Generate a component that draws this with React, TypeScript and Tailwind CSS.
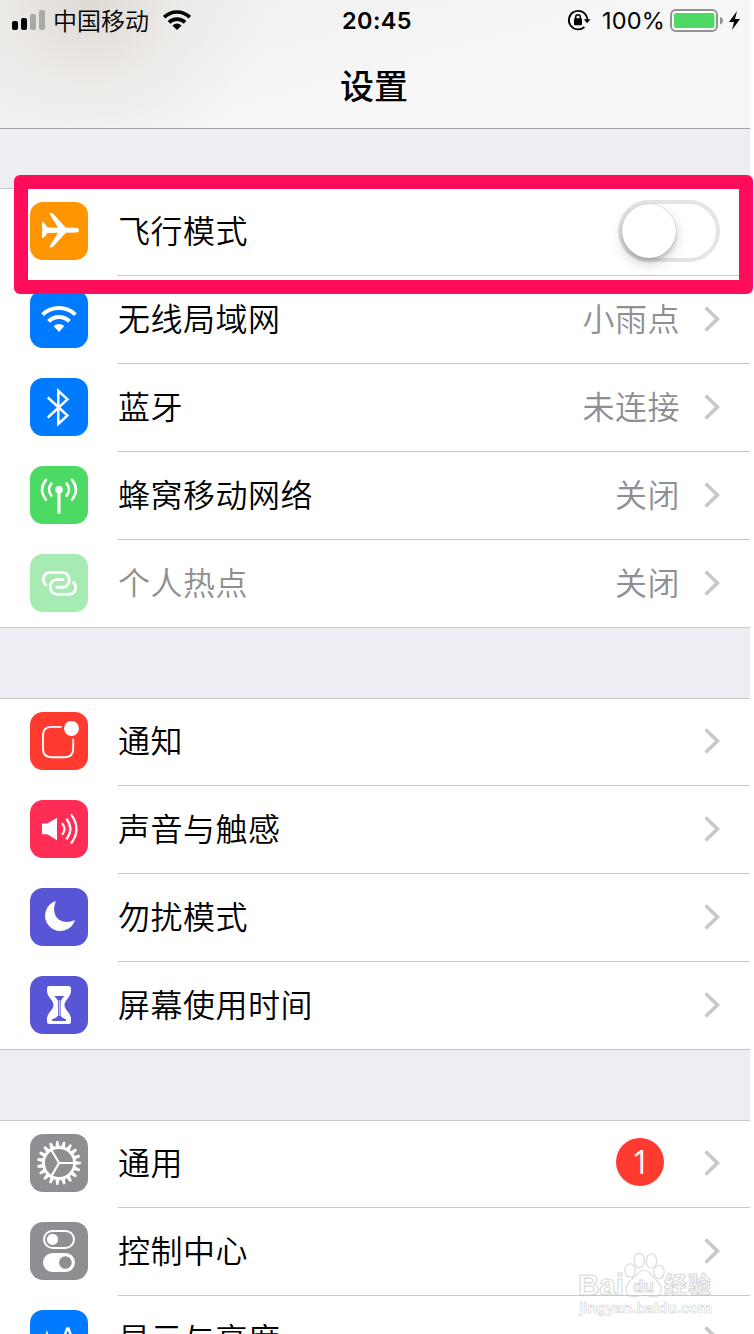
import type { ReactNode } from "react";

const PlaneIcon = () => (
  <svg viewBox="0 0 58 58" className="size-full" fill="#fff">
    <path d="M12 20 H13.6 L17.5 25.6 L28 25.8 L19 11 H22.6 L35.8 25.7 L46 25.8 Q49 26.2 49 28.2 Q49 30.2 46 30.6 L35.8 30.7 L22.6 45.2 H19 L28 30.8 L17.5 31 L13.6 36 H12 V30 L12.6 28.3 L12 26.5 Z" />
  </svg>
);

const WifiIcon = () => (
  <svg viewBox="0 0 58 58" className="size-full" fill="none" stroke="#fff" strokeWidth="4">
    <path d="M12.6 24.6 A24 24 0 0 1 45.4 24.6" />
    <path d="M18.6 31.4 A14.5 14.5 0 0 1 39.4 31.4" />
    <path d="M23.6 36 Q29 32 34.4 36 L29 42 Z" fill="#fff" stroke="none" />
  </svg>
);

const BluetoothIcon = () => (
  <svg viewBox="0 0 58 58" className="size-full" fill="none" stroke="#fff" strokeWidth="2.5">
    <path d="M17.8 19.5 L37.5 37.5 L28.3 46 V12.8 L37.5 21.3 L17.8 39.5" />
  </svg>
);

const CellularIcon = () => (
  <svg viewBox="0 0 58 58" className="size-full" fill="none" stroke="#fff" strokeWidth="2.6" strokeLinecap="round">
    <circle cx="29" cy="23.5" r="3.8" fill="#fff" stroke="none" />
    <path d="M29 24 V46.5" strokeWidth="3.2" />
    <path d="M21.4 17.4 Q16.6 23.5 21.4 29.6 M36.6 17.4 Q41.4 23.5 36.6 29.6" />
    <path d="M16 13.9 Q8 23.8 16 33.7 M42 13.9 Q50 23.8 42 33.7" />
  </svg>
);

const HotspotIcon = () => (
  <svg viewBox="0 0 58 58" className="size-full" fill="none" stroke="#fff" strokeWidth="2.9" strokeLinecap="round">
    <path d="M15.8 30.8 C11.5 26.6 13 18.4 20.5 18.4 H32 C41.5 18.4 41.5 33.2 33 33.2 H27" />
    <path d="M43.4 28.2 C47.5 32.5 46 40.4 38.5 40.4 H27.5 C18 40.4 18 25.6 27 25.6 H33" />
  </svg>
);

const NotificationIcon = () => (
  <svg viewBox="0 0 58 58" className="size-full" fill="none" stroke="#fff" strokeWidth="1.9">
    <path d="M31.5 14.9 H21.5 Q13 14.9 13 23.4 V36.8 Q13 45.2 21.5 45.2 H34.8 Q43.2 45.2 43.2 36.8 V26.8" />
    <circle cx="41.5" cy="16.4" r="7.5" fill="#fff" stroke="none" />
  </svg>
);

const SoundIcon = () => (
  <svg viewBox="0 0 58 58" className="size-full" fill="none" stroke="#fff" strokeWidth="2.2">
    <path d="M12 23.6 H17.3 L27 17.8 V40.3 L17.3 34.3 H12 Z" fill="#fff" stroke="none" />
    <path d="M32 23.2 Q37 29 32 34.8 M36.4 18.8 Q44.4 29 36.4 39.2 M41 14.4 Q52 29 41 43.6" />
  </svg>
);

const MoonIcon = () => (
  <svg viewBox="0 0 58 58" className="size-full" fill="#fff">
    <path d="M26 13 A15.3 15.3 0 1 0 45 32 C31 38.5 19.5 28 26 13 Z" />
  </svg>
);

const HourglassIcon = () => (
  <svg viewBox="0 0 58 58" className="size-full">
    <path d="M19.5 10 H38.5 Q41 10 41 12.5 V15 C41 21 34.5 24 34.5 29 C34.5 34 41 37 41 43 V45.5 Q41 48 38.5 48 H19.5 Q17 48 17 45.5 V43 C17 37 23.5 34 23.5 29 C23.5 24 17 21 17 15 V12.5 Q17 10 19.5 10 Z" fill="#fff" />
    <path d="M24 20 H34.7 Q30.8 23.3 30.6 26 V39.6 Q31.5 41.8 36 43.4 V45 H22 V43.4 Q27 41.8 28 39.6 V26 Q28 23.3 24 20 Z" fill="#5856d6" />
    <path d="M29.3 24 V40" stroke="#fff" strokeWidth="0.8" />
  </svg>
);

const teeth = Array.from({ length: 19 }, (_, i) => (i * 360) / 19);

const GearIcon = () => (
  <svg viewBox="0 0 58 58" className="size-full">
    <circle cx="29" cy="29" r="15.5" fill="none" stroke="#fff" strokeWidth="2.8" />
    {teeth.map((angle) => (
      <path key={angle} d="M44.5 26.8 L51 27.9 V30.1 L44.5 31.2 Z" fill="#fff" transform={`rotate(${angle} 29 29)`} />
    ))}
    <path d="M29 29 H44 M29 29 L21.2 15.5 M29 29 L21.2 42.5" stroke="#fff" strokeWidth="2.2" />
  </svg>
);

const ControlIcon = () => (
  <svg viewBox="0 0 58 58" className="size-full">
    <rect x="14" y="8.9" width="30" height="17" rx="8.5" fill="none" stroke="#fff" strokeWidth="2" />
    <circle cx="22.5" cy="17.4" r="5.6" fill="#fff" />
    <rect x="13" y="31" width="32" height="19" rx="9.5" fill="#fff" />
    <circle cx="35.4" cy="40.5" r="6.3" fill="#8e8e93" />
  </svg>
);

const DisplayIcon = () => (
  <svg viewBox="0 0 58 58" className="size-full" fill="none" stroke="#fff" strokeWidth="2.4">
    <path d="M28.5 42 L37.2 18.5 H38.4 L47.5 42 M31.5 34 H44.5" />
    <path d="M11 42 L17 24 L23 42 M13 36 H21" />
  </svg>
);

const Chevron = () => (
  <svg viewBox="0 0 16 26" className="mr-[30px] ml-6 h-[26px] w-4 shrink-0" fill="none" stroke="#c7c7cc" strokeWidth="3.6">
    <path d="M1.6 1.5 L13.4 13 L1.6 24.5" />
  </svg>
);

const Toggle = () => (
  <div className="mr-[30px] h-[62px] w-[102px] rounded-full border-4 border-[#e5e5e5] bg-white">
    <div className="size-[54px] rounded-full bg-white shadow-[0_6px_14px_rgba(0,0,0,0.17),0_3px_4px_rgba(0,0,0,0.16),0_0_1px_rgba(0,0,0,0.3)]" />
  </div>
);

interface Item {
  label: string;
  color: string;
  icon: ReactNode;
  value?: string;
  badge?: string;
  toggle?: boolean;
  disabled?: boolean;
}

const network: Item[] = [
  { label: "飞行模式", color: "bg-[#ff9500]", icon: <PlaneIcon />, toggle: true },
  { label: "无线局域网", color: "bg-[#007aff]", icon: <WifiIcon />, value: "小雨点" },
  { label: "蓝牙", color: "bg-[#007aff]", icon: <BluetoothIcon />, value: "未连接" },
  { label: "蜂窝移动网络", color: "bg-[#4cd964]", icon: <CellularIcon />, value: "关闭" },
  { label: "个人热点", color: "bg-[#a6ecb2]", icon: <HotspotIcon />, value: "关闭", disabled: true },
];

const alerts: Item[] = [
  { label: "通知", color: "bg-[#ff3b30]", icon: <NotificationIcon /> },
  { label: "声音与触感", color: "bg-[#ff2d55]", icon: <SoundIcon /> },
  { label: "勿扰模式", color: "bg-[#5856d6]", icon: <MoonIcon /> },
  { label: "屏幕使用时间", color: "bg-[#5856d6]", icon: <HourglassIcon /> },
];

const system: Item[] = [
  { label: "通用", color: "bg-[#8e8e93]", icon: <GearIcon />, badge: "1" },
  { label: "控制中心", color: "bg-[#8e8e93]", icon: <ControlIcon /> },
  { label: "显示与亮度", color: "bg-[#007aff]", icon: <DisplayIcon /> },
];

const Row = ({ item, last }: { item: Item; last: boolean }) => (
  <div className={`flex h-[88px] pl-[30px] ${last ? "border-b border-[#c8c7cc]" : ""}`}>
    <div className={`mt-3.5 size-[58px] shrink-0 rounded-[13px] ${item.color}`}>{item.icon}</div>
    <div className={`ml-[30px] flex flex-1 items-center pb-0.5 ${last ? "" : "border-b border-[#c8c7cc]"}`}>
      <span className={`flex-1 pb-[3px] text-[32px] leading-[44px] tracking-[0.5px] ${item.disabled ? "text-[#8e8e93]" : "text-black"}`}>{item.label}</span>
      {item.value && <span className="pb-[3px] text-[32px] leading-[44px] tracking-[0.5px] text-[#8e8e93]">{item.value}</span>}
      {item.badge && (
        <span className="mr-4 mb-0.5 flex size-12 items-center justify-center rounded-full bg-[#ff3b30] pl-0.5 font-['Open_Sans',sans-serif] text-[33px] leading-none font-normal text-white">
          {item.badge}
        </span>
      )}
      {item.toggle ? <Toggle /> : <Chevron />}
    </div>
  </div>
);

const Group = ({ items, className }: { items: Item[]; className: string }) => (
  <section className={`shrink-0 border-t border-[#c8c7cc] bg-white ${className}`}>
    <div className="-mt-px">
      {items.map((item, i) => (
        <Row key={item.label} item={item} last={i === items.length - 1} />
      ))}
    </div>
  </section>
);

const StatusBar = () => (
  <div className="-mt-px grid h-[42px] grid-cols-[1fr_auto_1fr] items-center">
    <div className="flex h-10 items-center pl-3">
      <svg viewBox="0 0 34 22" className="h-[22px] w-[34px]">
        <rect x="0" y="12" width="6" height="9" rx="2" />
        <rect x="9" y="9" width="6" height="12" rx="2" />
        <rect x="18" y="5" width="6" height="16" rx="2" fill="#aaa9a7" />
        <rect x="27" y="1" width="6" height="20" rx="2" fill="#aaa9a7" />
      </svg>
      <span className="ml-[7px] text-2xl leading-10">中国移动</span>
      <svg viewBox="0 0 28 20" className="ml-3.5 h-5 w-7" fill="none" stroke="#000" strokeWidth="3.6">
        <path d="M1.2 7.2 A18.4 18.4 0 0 1 26.8 7.2" />
        <path d="M6 12.4 A11.5 11.5 0 0 1 22 12.4" />
        <path d="M9.4 15.4 Q14 11.6 18.6 15.4 L14 20 Z" fill="#000" stroke="none" />
      </svg>
    </div>
    <span className="pt-0.5 pl-1 font-['Inter',sans-serif] text-[23.5px] leading-10 font-semibold tracking-[0.4px]">20:45</span>
    <div className="flex items-center justify-end pt-0.5 pr-2">
      <svg viewBox="0 0 24 22" className="mb-0.5 h-[22px] w-6" fill="none" stroke="#000" strokeWidth="1.8">
        <path d="M19.3 6.6 A9.3 9.3 0 1 0 17.4 18 M18.8 6 Q20.5 8.6 20.4 11" />
        <path d="M16.8 10.2 H23.5 L20.1 14.2 Z" fill="#000" stroke="none" />
        <rect x="7" y="9.2" width="8" height="7" rx="1" fill="#000" stroke="none" />
        <path d="M8.7 10 V8 A2.3 2.3 0 0 1 13.3 8 V10" strokeWidth="1.5" />
      </svg>
      <span className="ml-[11px] w-[62px] font-['Inter',sans-serif] text-[23.5px] leading-10 font-normal tracking-[0.2px] whitespace-nowrap">100%</span>
      <svg viewBox="0 0 72 24" className="ml-1.5 h-6 w-[72px]">
        <rect x="1" y="1" width="46" height="21" rx="5" fill="#fff" stroke="#929292" strokeWidth="2" />
        <rect x="4" y="4" width="40.5" height="15" rx="2" fill="#4cd964" />
        <path d="M50 8 Q53 9 53 11.7 Q53 14.4 50 15.4 Z" fill="#929292" />
        <path d="M67 2 L59 13 H64 L62 21 L70 10 H65 Z" fill="#000" />
      </svg>
    </div>
  </div>
);

const Watermark = () => (
  <svg viewBox="0 0 140 68" className="absolute top-[1252px] left-[576px] h-[68px] w-[140px]" fill="none" stroke="#d9d9d9" strokeWidth="1.1">
    <ellipse cx="54" cy="18.5" rx="5.2" ry="6.8" />
    <ellipse cx="63.2" cy="8.5" rx="5.2" ry="7.3" />
    <ellipse cx="75.5" cy="9" rx="5.2" ry="7.3" />
    <ellipse cx="83" cy="20" rx="5.2" ry="6.8" />
    <path d="M68 18 C74 18 76 25 81 29 C89 37 84 47 75 44.5 C70 43 65 43 60 44.5 C50 47 47 37 54 29 C60 25 62 18 68 18 Z" />
    <g fill="#fff">
      <text x="2" y="42.5" fontFamily="Liberation Sans, sans-serif" fontSize="30" fontWeight="700" textLength="46" lengthAdjust="spacingAndGlyphs">Bai</text>
      <text x="57" y="40" fontFamily="Liberation Sans, sans-serif" fontSize="17" fontWeight="700" textLength="21">du</text>
      <text x="88" y="41" fontFamily="Noto Sans CJK SC, sans-serif" fontSize="23" fontWeight="700" textLength="47">经验</text>
      <text x="3" y="60.5" fontFamily="Liberation Sans, sans-serif" fontSize="15" fontWeight="700" textLength="133" lengthAdjust="spacingAndGlyphs" strokeWidth="0.7">jingyan.baidu.com</text>
    </g>
    <path d="M0 43.5 H140" stroke="#c8c7cc" strokeWidth="1" />
  </svg>
);

export default function App() {
  return (
    <div className="relative h-[1334px] w-[754px] overflow-hidden bg-white font-['Noto_Sans_CJK_SC',sans-serif] font-[350] text-black">
      <main className="flex h-full w-[750px] flex-col bg-[#eeedf3]">
        <header className="h-[129px] shrink-0 border-b border-[#a4a3a9] bg-[radial-gradient(ellipse_180px_175px_at_90px_0px,#dedad4_0%,#ebe7e3a0_50%,transparent_100%),linear-gradient(165deg,#eeeeee,#f6f6f7_55%)]">
          <StatusBar />
          <h1 className="pt-5 pr-0.5 text-center text-[34px] leading-[48px] font-medium">设置</h1>
        </header>
        <Group items={network} className="mt-[59px]" />
        <Group items={alerts} className="mt-[70px]" />
        <Group items={system} className="mt-[70px]" />
      </main>
      <div className="absolute top-[175px] left-[14px] h-[119px] w-[739px] rounded-[6px] border-14 border-[#ff0d5b]" />
      <Watermark />
    </div>
  );
}
